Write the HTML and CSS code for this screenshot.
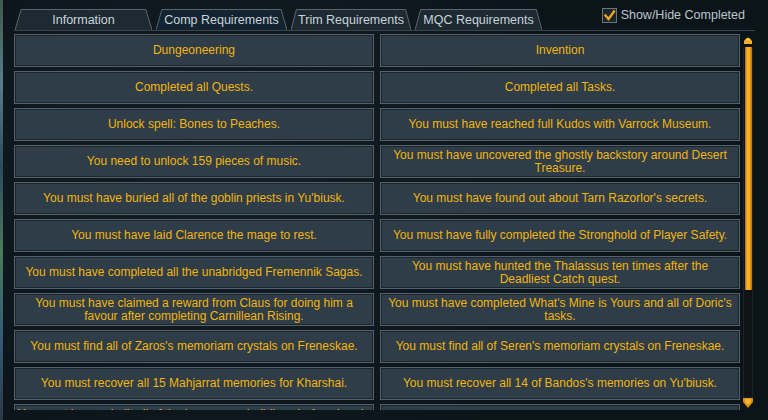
FILE: index.html
```html
<!DOCTYPE html>
<html>
<head>
<meta charset="utf-8">
<link rel="stylesheet" href="styles.css">
</head>
<body>
<div class="window">
  <div class="edge"></div>
  <div class="main">
    <div class="topbar">
      <nav class="tabs">
        <div class="tab tab-info"><svg class="tab-shape" viewBox="0 0 100 21" preserveAspectRatio="none"><path d="M0 21 L4.5 0.5 L95.5 0.5 L100 21" vector-effect="non-scaling-stroke"/></svg><span>Information</span></div>
        <div class="tab tab-comp active"><svg class="tab-shape" viewBox="0 0 100 21" preserveAspectRatio="none"><path d="M0 21 L4.5 0.5 L95.5 0.5 L100 21" vector-effect="non-scaling-stroke"/></svg><span>Comp Requirements</span></div>
        <div class="tab tab-trim"><svg class="tab-shape" viewBox="0 0 100 21" preserveAspectRatio="none"><path d="M0 21 L4.5 0.5 L95.5 0.5 L100 21" vector-effect="non-scaling-stroke"/></svg><span>Trim Requirements</span></div>
        <div class="tab tab-mqc"><svg class="tab-shape" viewBox="0 0 100 21" preserveAspectRatio="none"><path d="M0 21 L4.5 0.5 L95.5 0.5 L100 21" vector-effect="non-scaling-stroke"/></svg><span>MQC Requirements</span></div>
      </nav>
      <label class="toggle">
        <span class="box"><svg viewBox="0 0 15 15" width="15" height="15"><path d="M3.5 7.5 L6.5 11 L12 3.5" fill="none" stroke="#f0a21c" stroke-width="2.4" stroke-linecap="square"/></svg></span>
        <span class="toggle-label">Show/Hide Completed</span>
      </label>
    </div>
    <div class="body">
      <div class="grid">
        <div class="cell">Dungeoneering</div>
        <div class="cell">Invention</div>
        <div class="cell">Completed all Quests.</div>
        <div class="cell">Completed all Tasks.</div>
        <div class="cell">Unlock spell: Bones to Peaches.</div>
        <div class="cell">You must have reached full Kudos with Varrock Museum.</div>
        <div class="cell">You need to unlock 159 pieces of music.</div>
        <div class="cell">You must have uncovered the ghostly backstory around Desert<br>Treasure.</div>
        <div class="cell">You must have buried all of the goblin priests in Yu'biusk.</div>
        <div class="cell">You must have found out about Tarn Razorlor's secrets.</div>
        <div class="cell">You must have laid Clarence the mage to rest.</div>
        <div class="cell">You must have fully completed the Stronghold of Player Safety.</div>
        <div class="cell">You must have completed all the unabridged Fremennik Sagas.</div>
        <div class="cell">You must have hunted the Thalassus ten times after the<br>Deadliest Catch quest.</div>
        <div class="cell">You must have claimed a reward from Claus for doing him a<br>favour after completing Carnillean Rising.</div>
        <div class="cell">You must have completed What's Mine is Yours and all of Doric's<br>tasks.</div>
        <div class="cell">You must find all of Zaros's memoriam crystals on Freneskae.</div>
        <div class="cell">You must find all of Seren's memoriam crystals on Freneskae.</div>
        <div class="cell">You must recover all 15 Mahjarrat memories for Kharshai.</div>
        <div class="cell">You must recover all 14 of Bandos's memories on Yu'biusk.</div>
        <div class="cell">You must have rebuilt all of the base camp buildings in Anachronia<br>for Laniakea.</div>
        <div class="cell">You must have completed the Tower of Voices.</div>
      </div>
      <div class="scroll">
        <svg class="arrow-up" viewBox="0 0 10 12" width="10" height="12"><path d="M1 9 L1 6 Q5 -1 9 6 L9 9 Z" fill="#f3b02a"/><path d="M3 5 Q5 2 7 5 Z" fill="#ffd66a"/><rect x="1" y="9" width="8" height="3" fill="#1a1206"/></svg>
        <div class="track"><div class="thumb"></div></div>
        <svg class="arrow-down" viewBox="0 0 10 10" width="10" height="10"><path d="M0 0 L10 0 L10 4 L5 10 L0 4 Z" fill="#d98b12"/><path d="M2 1 L8 1 L8 4 L5 7 L2 4 Z" fill="#f6b531"/></svg>
      </div>
    </div>
  </div>
</div>
</body>
</html>
```

FILE: styles.css
```css
* { box-sizing: border-box; }
html, body {
  margin: 0;
  padding: 0;
}
body {
  width: 768px;
  height: 420px;
  overflow: hidden;
  background: #0b1419;
  font-family: "Liberation Sans", Arial, sans-serif;
}
.window {
  display: flex;
  height: 420px;
  background:
    radial-gradient(circle at 30% 40%, rgba(40,60,70,0.25), transparent 60%),
    #0b1419;
}
.edge {
  width: 3px;
  flex: none;
  background: linear-gradient(180deg, #3d5a4a 0%, #5b7c8a 20%, #2e4a5e 40%, #4c7a5a 60%, #365a78 80%, #2a3a44 100%);
}
.main {
  margin-left: 11px;
  width: 741px;
  display: flex;
  flex-direction: column;
}
.topbar {
  height: 31px;
  padding-top: 9px;
  padding-right: 10px;
  display: flex;
  justify-content: space-between;
  border-bottom: 1px solid #38434a;
}
.tabs {
  display: flex;
  gap: 4px;
  padding-left: 1px;
  height: 21px;
}
.tab {
  position: relative;
  height: 21px;
  display: flex;
  align-items: center;
  justify-content: center;
  color: #c8d4dc;
  font-size: 12.5px;
  padding-top: 1px;
}
.tab span { position: relative; }
.tab-shape {
  position: absolute;
  inset: 0;
  width: 100%;
  height: 100%;
}
.tab-shape path {
  fill: #1e2a31;
  stroke: #5a666d;
  stroke-width: 1;
}
.tab.active .tab-shape path { fill: #132330; }
.tab-info { width: 137px; }
.tab-comp { width: 131px; }
.tab-trim { width: 120px; }
.tab-mqc { width: 127px; }
.toggle {
  display: flex;
  align-items: flex-start;
  gap: 4px;
  margin-top: -1px;
  color: #b9c5cc;
  font-size: 12.5px;
}
.box {
  width: 15px;
  height: 15px;
  background: #1b252c;
  border: 1px solid #6a757b;
  display: flex;
  align-items: center;
  justify-content: center;
}
.box svg { flex: none; }
.toggle-label { line-height: 15px; }
.body {
  display: flex;
  margin-top: 3px;
  height: 376px;
}
.grid {
  width: 726px;
  height: 376px;
  overflow: hidden;
  display: grid;
  grid-template-columns: 360px 360px;
  grid-auto-rows: 33px;
  column-gap: 6px;
  row-gap: 4px;
}
.cell {
  background: #2e3d48;
  border: 1px solid #55616a;
  box-shadow: inset 0 0 0 1px #1b262e;
  display: flex;
  align-items: center;
  justify-content: center;
  text-align: center;
  white-space: nowrap;
  overflow: hidden;
  color: #f2b50c;
  font-size: 12px;
  line-height: 13px;
  padding: 0 2px;
}
.scroll {
  margin-left: 3px;
  margin-top: 1px;
  width: 10px;
  height: 373px;
  display: flex;
  flex-direction: column;
}
.arrow-up, .arrow-down { display: block; flex: none; }
.track {
  flex: 1;
  background: #0f1316;
  border: 1px solid #1c2328;
  border-top: none;
}
.thumb {
  margin: 0 0.5px;
  height: 243px;
  background: linear-gradient(90deg, #a8650a 0%, #f3b22c 30%, #f4ad22 65%, #b06a0a 100%);
}
```
